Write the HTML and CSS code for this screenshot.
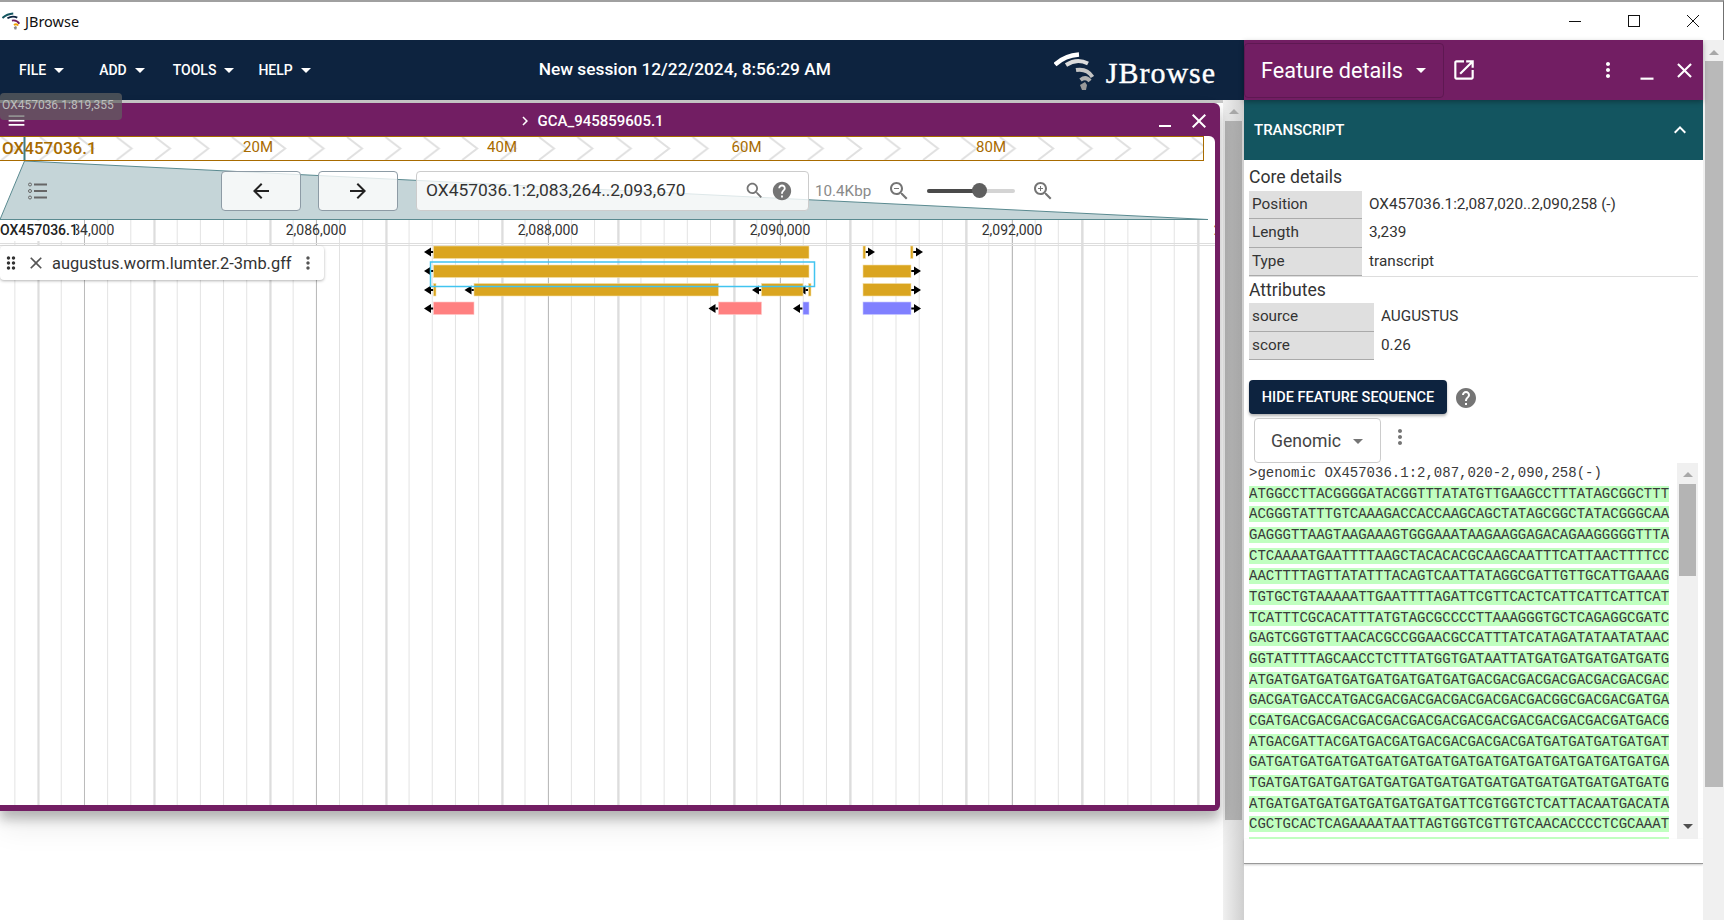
FILE: index.html
```html
<!DOCTYPE html>
<html lang="en">
<head>
    <meta charset="UTF-8">
    <title>JBrowse</title>
    <link rel="stylesheet" href="styles.css">
</head>
<body>
    <!-- shared icons -->
    <svg class="icon-defs" aria-hidden="true">
        <symbol id="i-back" viewBox="0 0 24 24"><path d="M20 11H7.83l5.59-5.59L12 4l-8 8 8 8 1.41-1.41L7.83 13H20v-2z"/></symbol>
        <symbol id="i-forward" viewBox="0 0 24 24"><path d="M12 4l-1.41 1.41L16.17 11H4v2h12.17l-5.58 5.59L12 20l8-8z"/></symbol>
        <symbol id="i-search" viewBox="0 0 24 24"><path d="M15.5 14h-.79l-.28-.27C15.41 12.59 16 11.11 16 9.5 16 5.91 13.09 3 9.5 3S3 5.91 3 9.5 5.91 16 9.5 16c1.61 0 3.09-.59 4.23-1.57l.27.28v.79l5 4.99L20.49 19l-4.99-5zm-6 0C7.01 14 5 11.99 5 9.5S7.01 5 9.5 5 14 7.01 14 9.5 11.99 14 9.5 14z"/></symbol>
        <symbol id="i-zoom-out" viewBox="0 0 24 24"><path d="M15.5 14h-.79l-.28-.27C15.41 12.59 16 11.11 16 9.5 16 5.91 13.09 3 9.5 3S3 5.91 3 9.5 5.91 16 9.5 16c1.61 0 3.09-.59 4.23-1.57l.27.28v.79l5 4.99L20.49 19l-4.99-5zm-6 0C7.01 14 5 11.99 5 9.5S7.01 5 9.5 5 14 7.01 14 9.5 11.99 14 9.5 14z"/><path d="M7 9h5v1H7z"/></symbol>
        <symbol id="i-zoom-in" viewBox="0 0 24 24"><path d="M15.5 14h-.79l-.28-.27C15.41 12.59 16 11.11 16 9.5 16 5.91 13.09 3 9.5 3S3 5.91 3 9.5 5.91 16 9.5 16c1.61 0 3.09-.59 4.23-1.57l.27.28v.79l5 4.99L20.49 19l-4.99-5zm-6 0C7.01 14 5 11.99 5 9.5S7.01 5 9.5 5 14 7.01 14 9.5 11.99 14 9.5 14z"/><path d="M12 10h-2v2H9v-2H7V9h2V7h1v2h2v1z"/></symbol>
        <symbol id="i-help" viewBox="0 0 24 24"><path d="M12 2C6.48 2 2 6.48 2 12s4.48 10 10 10 10-4.48 10-10S17.52 2 12 2zm1 17h-2v-2h2v2zm2.07-7.75l-.9.92C13.45 12.9 13 13.5 13 15h-2v-.5c0-1.1.45-2.1 1.17-2.83l1.24-1.26c.37-.36.59-.86.59-1.41 0-1.1-.9-2-2-2s-2 .9-2 2H8c0-2.21 1.79-4 4-4s4 1.79 4 4c0 .88-.36 1.68-.93 2.25z"/></symbol>
        <symbol id="i-close" viewBox="0 0 24 24"><path d="M19 6.41L17.59 5 12 10.59 6.41 5 5 6.41 10.59 12 5 17.59 6.41 19 12 13.41 17.59 19 19 17.59 13.41 12z"/></symbol>
        <symbol id="i-more" viewBox="0 0 24 24"><path d="M12 8c1.1 0 2-.9 2-2s-.9-2-2-2-2 .9-2 2 .9 2 2 2zm0 2c-1.1 0-2 .9-2 2s.9 2 2 2 2-.9 2-2-.9-2-2-2zm0 6c-1.1 0-2 .9-2 2s.9 2 2 2 2-.9 2-2-.9-2-2-2z"/></symbol>
        <symbol id="i-caret" viewBox="0 0 24 24"><path d="M7 10l5 5 5-5z"/></symbol>
        <symbol id="i-open" viewBox="0 0 24 24"><path d="M19 19H5V5h7V3H5c-1.11 0-2 .9-2 2v14c0 1.1.89 2 2 2h14c1.1 0 2-.9 2-2v-7h-2v7zM14 3v2h3.59l-9.83 9.83 1.41 1.41L19 6.41V10h2V3h-7z"/></symbol>
        <symbol id="i-minimize" viewBox="0 0 24 24"><path d="M6 19h12v2H6z"/></symbol>
        <symbol id="i-less" viewBox="0 0 24 24"><path d="M12 8l-6 6 1.41 1.41L12 10.83l4.59 4.58L18 14z"/></symbol>
        <symbol id="i-right" viewBox="0 0 24 24"><path d="M10 6L8.59 7.41 13.17 12l-4.58 4.59L10 18l6-6z"/></symbol>
        <symbol id="i-menu" viewBox="0 0 24 24"><path d="M3 18h18v-2H3v2zm0-5h18v-2H3v2zm0-7v2h18V6H3z"/></symbol>
        <symbol id="i-drag" viewBox="0 0 24 24"><path d="M11 18c0 1.1-.9 2-2 2s-2-.9-2-2 .9-2 2-2 2 .9 2 2zm-2-8c-1.1 0-2 .9-2 2s.9 2 2 2 2-.9 2-2-.9-2-2-2zm0-6c-1.1 0-2 .9-2 2s.9 2 2 2 2-.9 2-2-.9-2-2-2zm6 4c1.1 0 2-.9 2-2s-.9-2-2-2-2 .9-2 2 .9 2 2 2zm0 2c-1.1 0-2 .9-2 2s.9 2 2 2 2-.9 2-2-.9-2-2-2zm0 6c-1.1 0-2 .9-2 2s.9 2 2 2 2-.9 2-2-.9-2-2-2z"/></symbol>
        <symbol id="i-logo" viewBox="0 0 40 38">
            <g fill="none" stroke-linecap="butt">
                <path class="arc-1" d="M1 12.5Q11 3.500 25 2.500"/>
                <path class="arc-2" d="M12 13Q23 6 34 11.500"/>
                <path class="arc-3" d="M22 18Q33 16 38.500 25"/>
                <path class="arc-4" d="M26.500 28Q32 24 36 29"/>
            </g>
            <path class="arc-5" d="M26 33l5-3 2 3-1 5h-4z"/>
        </symbol>
    </svg>

    <!-- desktop window frame -->
    <div class="titlebar">
        <svg class="app-icon"><use href="#i-logo"/></svg>
        <span class="app-name">JBrowse</span>
        <div class="win-controls">
            <span class="win-min"></span>
            <span class="win-max"></span>
            <svg class="win-close" viewBox="0 0 14 14"><path d="M1 1l12 12M13 1L1 13"/></svg>
        </div>
    </div>

    <div class="app">
        <div class="main">
            <div class="nav">
                <div class="menu menu-file">FILE<svg class="icon"><use href="#i-caret"/></svg></div>
                <div class="menu menu-add">ADD<svg class="icon"><use href="#i-caret"/></svg></div>
                <div class="menu menu-tools">TOOLS<svg class="icon"><use href="#i-caret"/></svg></div>
                <div class="menu">HELP<svg class="icon"><use href="#i-caret"/></svg></div>
                <div class="session-name">New session 12/22/2024, 8:56:29 AM</div>
                <svg class="logo-mark"><use href="#i-logo"/></svg>
                <span class="logo-text">JBrowse</span>
            </div>

            <div class="workspace">
                <div class="views">
                    <div class="view">
                        <div class="tooltip">OX457036.1:819,355</div>
                        <div class="view-title">
                            <svg class="icon icon-menu"><use href="#i-menu"/></svg>
                            <svg class="icon icon-title-arrow"><use href="#i-right"/></svg>
                            <span class="view-name">GCA_945859605.1</span>
                            <svg class="icon icon-view-min"><use href="#i-minimize"/></svg>
                            <svg class="icon icon-view-close"><use href="#i-close"/></svg>
                        </div>

                        <div class="overview-row">
                            <svg class="overview" viewBox="0 0 1203 23">
                                <defs>
                                    <pattern id="chevrons" x="0.4" y="0" width="38.4" height="23" patternUnits="userSpaceOnUse">
                                        <polyline points="1,0 16,11.500 1,23"/>
                                    </pattern>
                                </defs>
                                <rect width="1203" height="23" fill="url(#chevrons)"/>
                                <text class="ov-label" x="258" y="15" text-anchor="middle">20M</text>
                                <text class="ov-label" x="502" y="15" text-anchor="middle">40M</text>
                                <text class="ov-label" x="746.500" y="15" text-anchor="middle">60M</text>
                                <text class="ov-label" x="991" y="15" text-anchor="middle">80M</text>
                                <text class="ov-name" x="2" y="17">OX457036.1</text>
                                <rect class="ov-marker" x="23.500" width="2" height="23"/>
                            </svg>
                        </div>

                        <div class="toolbar">
                            <svg class="zoom-wedge" viewBox="0 0 1215 59">
                                <polygon points="24.500,0 1208,58.500 0,58.500"/>
                            </svg>
                            <svg class="tracks-icon" viewBox="0 0 20 18">
                                <circle cx="2" cy="2.500" r="1.500"/><circle cx="2" cy="9" r="1.500"/><circle cx="2" cy="15.500" r="1.500"/>
                                <path d="M6 2.500h13M6 9h13M6 15.500h13"/>
                            </svg>
                            <button class="nav-btn nav-btn-back"><svg class="icon"><use href="#i-back"/></svg></button>
                            <button class="nav-btn nav-btn-forward"><svg class="icon"><use href="#i-forward"/></svg></button>
                            <div class="search-box">
                                <span class="search-text">OX457036.1:2,083,264..2,093,670</span>
                                <svg class="icon icon-grey icon-search"><use href="#i-search"/></svg>
                                <svg class="icon icon-grey icon-search-help"><use href="#i-help"/></svg>
                            </div>
                            <span class="bp-label">10.4Kbp</span>
                            <svg class="icon icon-grey icon-zoom-out"><use href="#i-zoom-out"/></svg>
                            <div class="slider"><div class="slider-fill"></div><div class="slider-thumb"></div></div>
                            <svg class="icon icon-grey icon-zoom-in"><use href="#i-zoom-in"/></svg>
                        </div>

                        <div class="tracks">
                            <svg class="track-canvas" viewBox="0 0 1215 585">
                                <defs>
                                    <g id="arrow-left"><polygon points="0,0 7,-4.500 7,4.500"/><rect x="7" y="-1" width="2.500" height="2"/></g>
                                    <g id="arrow-right"><polygon points="10,0 3,-4.500 3,4.500"/><rect y="-1" width="3" height="2"/></g>
                                </defs>
                                <path class="ruler-line" d="M0 23.500H1215M0 25.500H1215"/>
                                <g class="ticks">
                                    <text x="84" y="15" text-anchor="middle">2,084,000</text>
                                    <text x="316" y="15" text-anchor="middle">2,086,000</text>
                                    <text x="548" y="15" text-anchor="middle">2,088,000</text>
                                    <text x="780" y="15" text-anchor="middle">2,090,000</text>
                                    <text x="1012" y="15" text-anchor="middle">2,092,000</text>
                                    <text x="1244" y="15" text-anchor="middle">2,094,000</text>
                                </g>
                                <rect class="ref-bg" y="1" width="76" height="20"/>
                                <text class="ref-name" y="15">OX457036.1</text>

                                <g class="arrows">
                                    <use href="#arrow-left" x="424" y="32"/>
                                    <use href="#arrow-left" x="424" y="51"/>
                                    <use href="#arrow-left" x="424" y="70"/>
                                    <use href="#arrow-left" x="464.500" y="70"/>
                                    <use href="#arrow-left" x="752" y="70"/>
                                    <use href="#arrow-left" x="798.500" y="70"/>
                                    <use href="#arrow-left" x="424" y="88.500"/>
                                    <use href="#arrow-left" x="708.500" y="88.500"/>
                                    <use href="#arrow-left" x="793" y="88.500"/>
                                    <use href="#arrow-right" x="865" y="32"/>
                                    <use href="#arrow-right" x="913" y="32"/>
                                    <use href="#arrow-right" x="911" y="51"/>
                                    <use href="#arrow-right" x="911" y="70"/>
                                    <use href="#arrow-right" x="911" y="88.500"/>
                                </g>
                                <g class="cds">
                                    <rect x="433.500" y="26" width="375.500" height="12.500"/>
                                    <rect x="863" y="26" width="2.500" height="12.500"/>
                                    <rect x="910.500" y="26" width="2.500" height="12.500"/>
                                    <rect x="433.500" y="45" width="375.500" height="12.500"/>
                                    <rect x="863" y="45" width="48" height="12.500"/>
                                    <rect x="433.500" y="63.500" width="2.500" height="12.500"/>
                                    <rect x="474" y="63.500" width="244.500" height="12.500"/>
                                    <rect x="761.500" y="63.500" width="41.500" height="12.500"/>
                                    <rect x="808.500" y="63.500" width="2.500" height="12.500"/>
                                    <rect x="863" y="63.500" width="48" height="12.500"/>
                                </g>
                                <g class="utr-5">
                                    <rect x="433.500" y="82" width="40.500" height="12.500"/>
                                    <rect x="718.500" y="82" width="43" height="12.500"/>
                                </g>
                                <g class="utr-3">
                                    <rect x="803" y="82" width="6" height="12.500"/>
                                    <rect x="863" y="82" width="48" height="12.500"/>
                                </g>
                                <rect class="selection" x="430.500" y="42" width="384" height="24.500"/>
                            </svg>
                            <div class="track-label">
                                <svg class="icon icon-drag"><use href="#i-drag"/></svg>
                                <svg class="icon icon-label-close"><use href="#i-close"/></svg>
                                <span class="track-name">augustus.worm.lumter.2-3mb.gff</span>
                                <svg class="icon icon-label-more"><use href="#i-more"/></svg>
                            </div>
                        </div>
                    </div>
                </div>
                <div class="scrollbar scrollbar-main">
                    <span class="sb-up"></span>
                    <div class="sb-thumb"></div>
                </div>
            </div>
        </div>

        <div class="side">
            <div class="side-main">
                <div class="side-head">
                    <div class="widget-select">Feature details<svg class="icon"><use href="#i-caret"/></svg></div>
                    <svg class="icon icon-open"><use href="#i-open"/></svg>
                    <svg class="icon icon-side-more"><use href="#i-more"/></svg>
                    <svg class="icon icon-side-min"><use href="#i-minimize"/></svg>
                    <svg class="icon icon-side-close"><use href="#i-close"/></svg>
                </div>
                <div class="section-bar">
                    <span>TRANSCRIPT</span>
                    <svg class="icon"><use href="#i-less"/></svg>
                </div>

                <div class="details">
                    <h3 class="details-title details-core">Core details</h3>
                    <div class="attr-table">
                        <div class="attr-key">Position</div><div class="attr-value">OX457036.1:2,087,020..2,090,258 (-)</div>
                        <div class="attr-key">Length</div><div class="attr-value">3,239</div>
                        <div class="attr-key">Type</div><div class="attr-value">transcript</div>
                    </div>
                    <hr class="details-rule">
                    <h3 class="details-title">Attributes</h3>
                    <div class="attr-table attr-table-wide">
                        <div class="attr-key">source</div><div class="attr-value">AUGUSTUS</div>
                        <div class="attr-key">score</div><div class="attr-value">0.26</div>
                    </div>

                    <div class="seq-actions">
                        <button class="seq-btn">HIDE FEATURE SEQUENCE</button>
                        <svg class="icon icon-grey icon-seq-help"><use href="#i-help"/></svg>
                    </div>
                    <div class="seq-options">
                        <div class="seq-select">Genomic<svg class="icon icon-grey"><use href="#i-caret"/></svg></div>
                        <svg class="icon icon-grey icon-seq-more"><use href="#i-more"/></svg>
                    </div>
                    <div class="seq-box">
<pre class="seq-text">&gt;genomic OX457036.1:2,087,020-2,090,258(-)
<span class="seq-hl">ATGGCCTTACGGGGATACGGTTTATATGTTGAAGCCTTTATAGCGGCTTT
ACGGGTATTTGTCAAAGACCACCAAGCAGCTATAGCGGCTATACGGGCAA
GAGGGTTAAGTAAGAAAGTGGGAAATAAGAAGGAGACAGAAGGGGGTTTA
CTCAAAATGAATTTTAAGCTACACACGCAAGCAATTTCATTAACTTTTCC
AACTTTTAGTTATATTTACAGTCAATTATAGGCGATTGTTGCATTGAAAG
TGTGCTGTAAAAATTGAATTTTAGATTCGTTCACTCATTCATTCATTCAT
TCATTTCGCACATTTATGTAGCGCCCCTTAAAGGGTGCTCAGAGGCGATC
GAGTCGGTGTTAACACGCCGGAACGCCATTTATCATAGATATAATATAAC
GGTATTTTAGCAACCTCTTTATGGTGATAATTATGATGATGATGATGATG
ATGATGATGATGATGATGATGATGATGACGACGACGACGACGACGACGAC
GACGATGACCATGACGACGACGACGACGACGACGACGGCGACGACGATGA
CGATGACGACGACGACGACGACGACGACGACGACGACGACGACGATGACG
ATGACGATTACGATGACGATGACGACGACGACGATGATGATGATGATGAT
GATGATGATGATGATGATGATGATGATGATGATGATGATGATGATGATGA
TGATGATGATGATGATGATGATGATGATGATGATGATGATGATGATGATG
ATGATGATGATGATGATGATGATGATTCGTGGTCTCATTACAATGACATA
CGCTGCACTCAGAAAATAATTAGTGGTCGTTGTCAACACCCCTCGCAAAT
                                                  </span></pre>
                        <div class="scrollbar scrollbar-seq">
                            <span class="sb-up"></span>
                            <div class="sb-thumb"></div>
                            <span class="sb-down"></span>
                        </div>
                    </div>
                    <div class="details-end"></div>
                </div>
            </div>
            <div class="scrollbar scrollbar-side">
                <span class="sb-up"></span>
                <div class="sb-thumb"></div>
            </div>
        </div>
    </div>
</body>
</html>
```

FILE: styles.css
```css
* {
    box-sizing: border-box;
}
body {
    margin: 0;
    width: 1724px;
    height: 920px;
    overflow: hidden;
    background: #fff;
    font-family: Roboto, sans-serif;
    color: rgba(0, 0, 0, 0.87);
}
.icon-defs {
    display: none;
}
.icon {
    width: 24px;
    height: 24px;
    flex: none;
    fill: currentColor;
}
.icon-grey {
    color: #757575;
}

/* window frame */
.titlebar {
    height: 40px;
    display: flex;
    align-items: center;
    border-top: 2px solid #a0a0a0;
    border-right: 1px solid #707070;
    --arc-1: #135560;
    --arc-2: #0d233f;
    --arc-3: #721e63;
    --arc-4: #f0a000;
    --arc-5: #888;
}
.app-icon {
    width: 18px;
    height: 18px;
    margin-left: 2px;
}
.app-name {
    margin-left: 5px;
    font-family: "Noto Sans", sans-serif;
    font-size: 14.5px;
    color: #111;
}
.win-controls {
    margin-left: auto;
    display: flex;
    align-items: center;
}
.win-min {
    width: 12px;
    border-top: 1px solid #111;
    margin-right: 47px;
}
.win-max {
    width: 12px;
    height: 12px;
    border: 1px solid #111;
    margin-right: 46px;
}
.win-close {
    width: 14px;
    height: 14px;
    margin-right: 23px;
    fill: none;
    stroke: #111;
}

.app {
    display: flex;
    height: 880px;
}
.main {
    width: 1244px;
    flex: none;
    display: flex;
    flex-direction: column;
}

/* top nav */
.nav {
    height: 60px;
    flex: none;
    display: flex;
    align-items: center;
    padding-left: 11px;
    background: #0d233f;
    color: #fff;
    --arc-1: #fff;
    --arc-2: #dcdcdc;
    --arc-3: #c4c4c4;
    --arc-4: #b0b0b0;
    --arc-5: #999;
}
.menu {
    display: flex;
    align-items: center;
    padding: 0 8px;
    font-size: 14px;
    font-weight: 500;
}
.menu .icon {
    margin-left: 1px;
}
.menu-file {
    margin-right: 12px;
}
.menu-add {
    margin-right: 5px;
}
.menu-tools {
    margin-right: 1px;
}
.session-name {
    margin-left: 213px;
    margin-bottom: 2px;
    font-size: 17.3px;
    font-weight: 500;
}
.logo-mark {
    width: 40px;
    height: 38px;
    margin-left: 223px;
    margin-top: 2px;
}
.logo-text {
    margin-left: 12px;
    margin-top: 6px;
    font-family: "Liberation Serif", serif;
    font-size: 30px;
    letter-spacing: 1px;
    -webkit-text-stroke: 0.4px #fff;
}
.arc-1 { stroke: var(--arc-1); stroke-width: 4.5; }
.arc-2 { stroke: var(--arc-2); stroke-width: 4; }
.arc-3 { stroke: var(--arc-3); stroke-width: 4; }
.arc-4 { stroke: var(--arc-4); stroke-width: 4; }
.arc-5 { fill: var(--arc-5); }

/* main area */
.workspace {
    flex: 1;
    display: flex;
    min-height: 0;
}
.views {
    flex: 1;
    padding-top: 3px;
    background: linear-gradient(#c8c8c8 3px, #fff 3px);
}
.view {
    position: relative;
    width: 1220px;
    height: 708px;
    background: #721e63;
    padding: 0 5px 5px 0;
    border-radius: 0 6px 6px 0;
    box-shadow: 0 8px 12px rgba(0, 0, 0, 0.25), 0 16px 30px rgba(0, 0, 0, 0.08);
}
.tooltip {
    position: absolute;
    left: 0;
    top: -10px;
    width: 122px;
    height: 27px;
    z-index: 3;
    padding: 5px 2px;
    background: rgba(97, 97, 97, 0.7);
    border-radius: 4px;
    font-size: 12px;
    color: #bdbdbd;
}
.view-title {
    height: 33px;
    display: flex;
    align-items: center;
    padding-top: 2px;
    color: #fff;
}
.icon-menu {
    width: 21px;
    height: 21px;
    margin-left: 5.5px;
}
.icon-title-arrow {
    width: 18px;
    height: 18px;
    margin-left: 489px;
}
.view-name {
    margin-left: 4px;
    font-size: 15px;
    font-weight: 500;
}
.icon-view-min {
    margin-left: 489px;
    margin-top: -5px;
}
.icon-view-close {
    margin-left: 10px;
}
.overview-row {
    height: 25px;
    background: #fff;
    border-radius: 0 6px 0 0;
}
.overview {
    display: block;
    width: 1204px;
    height: 25px;
    border-top: 1px solid #a86b00;
    border-bottom: 1px solid #a86b00;
    border-right: 1px solid #a86b00;
}
.overview polyline {
    fill: none;
    stroke: #e0e0e0;
    stroke-width: 2;
}
.ov-label {
    font-size: 15px;
    fill: #a86b00;
}
.ov-name {
    font-size: 17px;
    font-weight: 500;
    fill: #a86b00;
}
.ov-marker {
    fill: #3f7d85;
}
.toolbar {
    position: relative;
    height: 59px;
    display: flex;
    align-items: center;
    background: #fff;
}
.zoom-wedge {
    position: absolute;
    left: 0;
    top: 0;
    width: 1215px;
    height: 59px;
}
.zoom-wedge polygon {
    fill: #c5d5d8;
    stroke: #5a8a90;
    stroke-width: 1;
}
.toolbar > :not(.zoom-wedge) {
    position: relative;
}
.tracks-icon {
    width: 20px;
    height: 18px;
    margin-left: 28px;
    fill: none;
    stroke: #666;
}
.tracks-icon path {
    stroke-width: 2;
}
.nav-btn {
    width: 80px;
    height: 40px;
    padding: 0;
    display: flex;
    align-items: center;
    justify-content: center;
    background: rgba(255, 255, 255, 0.8);
    border: 1px solid #8d9ba5;
    border-radius: 4px;
    color: #222;
}
.nav-btn-back {
    margin-left: 173px;
}
.nav-btn-forward {
    margin-left: 17px;
}
.search-box {
    width: 393px;
    height: 40px;
    margin-left: 18px;
    display: flex;
    align-items: center;
    padding-left: 9px;
    background: rgba(255, 255, 255, 0.8);
    border: 1px solid #ccc;
    border-radius: 4px;
}
.search-text {
    margin-bottom: 2px;
    font-size: 17.4px;
    color: #333;
}
.icon-search {
    width: 21px;
    height: 21px;
    margin-left: 58px;
}
.icon-search-help {
    width: 22px;
    height: 22px;
    margin-left: 6px;
}
.bp-label {
    margin-left: 6px;
    font-size: 15.2px;
    color: #8a8a8a;
}
.icon-zoom-out {
    margin-left: 16px;
}
.slider {
    position: relative;
    width: 88px;
    height: 4px;
    margin-left: 16px;
    background: #d4d4d4;
    border-radius: 2px;
}
.slider-fill {
    width: 52px;
    height: 4px;
    background: #4a4a4a;
    border-radius: 2px;
}
.slider-thumb {
    position: absolute;
    left: 45px;
    top: -6px;
    width: 15px;
    height: 15px;
    background: #5f5f5f;
    border-radius: 50%;
}
.icon-zoom-in {
    margin-left: 16px;
}

/* track area, the gridlines are the minor, mid and major ticks */
.tracks {
    position: relative;
    height: 585px;
    background-color: #fff;
    background-image:
        linear-gradient(to right, #bbb 1px, transparent 1px),
        linear-gradient(to right, #ddd 2px, transparent 2px),
        linear-gradient(to right, #e2e2e2 1px, transparent 1px);
    background-size: 232px 100%, 116px 100%, 23.2px 100%;
    background-position: 84px 0, 37.6px 0, 14.4px 0;
}
.track-canvas {
    display: block;
    width: 1215px;
    height: 585px;
}
.ruler-line {
    fill: none;
    stroke: #ddd;
}
.ticks text {
    font-size: 14px;
    fill: #333;
}
.ref-bg {
    fill: #fff;
}
.ref-name {
    font-size: 14px;
    font-weight: 500;
    fill: #222;
}
.arrows {
    fill: #000;
}
.cds rect {
    fill: #daa520;
    stroke: #f3dfa8;
    stroke-width: 0.6;
}
.utr-5 rect {
    fill: #ff8080;
    stroke: #ffc8c8;
    stroke-width: 0.6;
}
.utr-3 rect {
    fill: #8080ff;
    stroke: #c8c8ff;
    stroke-width: 0.6;
}
.selection {
    fill: none;
    stroke: #41c4f0;
    stroke-width: 1.5;
}
.track-label {
    position: absolute;
    left: 0;
    top: 26px;
    width: 324px;
    height: 34px;
    display: flex;
    align-items: center;
    background: #fff;
    border-radius: 4px;
    box-shadow: 0 1px 3px rgba(0, 0, 0, 0.3);
}
.icon-drag {
    width: 20px;
    height: 20px;
    margin-left: 1px;
    color: #333;
}
.icon-label-close {
    width: 20px;
    height: 20px;
    margin-left: 5px;
    color: #555;
}
.track-name {
    margin-left: 6px;
    font-size: 16.4px;
    color: #333;
}
.icon-label-more {
    width: 20px;
    height: 20px;
    margin-left: 6px;
    color: #555;
}

/* browser scrollbars */
.scrollbar {
    display: flex;
    flex-direction: column;
    align-items: center;
    flex: none;
}
.sb-up,
.sb-down {
    width: 0;
    height: 0;
    flex: none;
    border-left: 5px solid transparent;
    border-right: 5px solid transparent;
}
.sb-up {
    border-bottom: 5px solid #a8a8a8;
}
.sb-down {
    border-top: 5px solid #505050;
}
.sb-thumb {
    flex: none;
    background: #b4b4b4;
}
.scrollbar-main {
    width: 21px;
    padding-top: 9px;
    background: linear-gradient(to right, #f0f0f0, #cfcfcf);
}
.scrollbar-main .sb-thumb {
    width: 17px;
    height: 699px;
    margin-top: 7px;
    background: linear-gradient(to right, #b8b8b8, #a8a8a8);
}
.scrollbar-side {
    width: 21px;
    padding-top: 10px;
    background: #f0f0f0;
}
.scrollbar-side .sb-thumb {
    width: 18px;
    height: 726px;
    margin-top: 6px;
    background: #b9b9b9;
}
.scrollbar-seq {
    width: 21px;
    height: 100%;
    padding-top: 9px;
    background: #f0f0f0;
}
.scrollbar-seq .sb-thumb {
    width: 17px;
    height: 92px;
    margin-top: 7px;
}
.scrollbar-seq .sb-down {
    margin-top: auto;
    margin-bottom: 10px;
}

/* feature details panel */
.side {
    flex: 1;
    display: flex;
    min-width: 0;
}
.side-main {
    width: 459px;
    flex: none;
    background: #fff;
}
.side-head {
    position: relative;
    z-index: 1;
    height: 60px;
    display: flex;
    align-items: center;
    background: #721e63;
    color: #fff;
    box-shadow: 0 2px 5px rgba(0, 0, 0, 0.3);
}
.widget-select {
    width: 200px;
    height: 55px;
    flex: none;
    display: flex;
    align-items: center;
    padding-left: 16px;
    border: 1px solid #5e1852;
    border-radius: 4px;
    font-size: 21.6px;
}
.widget-select .icon {
    margin-left: 6px;
}
.icon-open {
    width: 26px;
    height: 26px;
    margin-left: 7px;
}
.icon-side-more {
    margin-left: 118.5px;
}
.icon-side-min {
    width: 26px;
    height: 26px;
    margin-left: 14px;
}
.icon-side-close {
    width: 25px;
    height: 25px;
    margin-left: 12px;
}
.section-bar {
    height: 60px;
    display: flex;
    align-items: center;
    justify-content: space-between;
    padding: 0 11px 0 10px;
    background: #135560;
    color: #fff;
    font-size: 15px;
    font-weight: 500;
}
.details {
    padding: 0 5px;
}
.details-title {
    margin: 0;
    height: 26px;
    font-size: 17.6px;
    font-weight: 400;
    line-height: 26px;
    color: #333;
}
.details-core {
    height: 31px;
    padding-top: 4px;
}
.attr-table {
    display: grid;
    grid-template-columns: 113px 1fr;
    grid-auto-rows: 28.4px;
    font-size: 15.3px;
    color: #333;
}
.attr-table-wide {
    grid-template-columns: 125px 1fr;
}
.attr-key {
    padding: 4px 3px;
    background: #dfdfdf;
    border-bottom: 1px solid #aaa;
}
.attr-value {
    padding: 4px 7px;
}
.details-rule {
    margin: 0;
    border: 0;
    border-top: 1px solid #ddd;
}
.seq-actions {
    display: flex;
    align-items: center;
    margin-top: 20px;
}
.seq-btn {
    width: 198px;
    height: 34px;
    padding: 2px 0 0;
    background: #0d233f;
    border: none;
    border-radius: 4px;
    box-shadow: 0 2px 3px rgba(0, 0, 0, 0.3);
    color: #fff;
    font-family: Roboto, sans-serif;
    font-size: 14.5px;
    font-weight: 500;
}
.icon-seq-help {
    margin-left: 7px;
    margin-top: 3px;
}
.seq-options {
    display: flex;
    margin-top: 4px;
    padding-left: 5px;
}
.seq-select {
    width: 127px;
    height: 45px;
    display: flex;
    align-items: center;
    padding: 2px 0 0 16px;
    background: #fff;
    border: 1px solid #ccc;
    border-radius: 4px;
    font-size: 17.6px;
    color: #444;
}
.seq-select .icon {
    margin-left: 5px;
}
.icon-seq-more {
    margin: 7px 0 0 7px;
}
.seq-box {
    display: flex;
    height: 376px;
    overflow: hidden;
}
.seq-text {
    width: 428px;
    margin: 0;
    flex: none;
    font-family: "Liberation Mono", monospace;
    font-size: 14px;
    line-height: 20.67px;
    color: #3a3a3a;
}
.seq-hl {
    background: #c0ffc0;
}
.details-end {
    height: 25px;
    margin: 0 -5px;
    border-bottom: 1px solid #999;
    box-shadow: 0 1px 2px rgba(0, 0, 0, 0.2);
}
```
